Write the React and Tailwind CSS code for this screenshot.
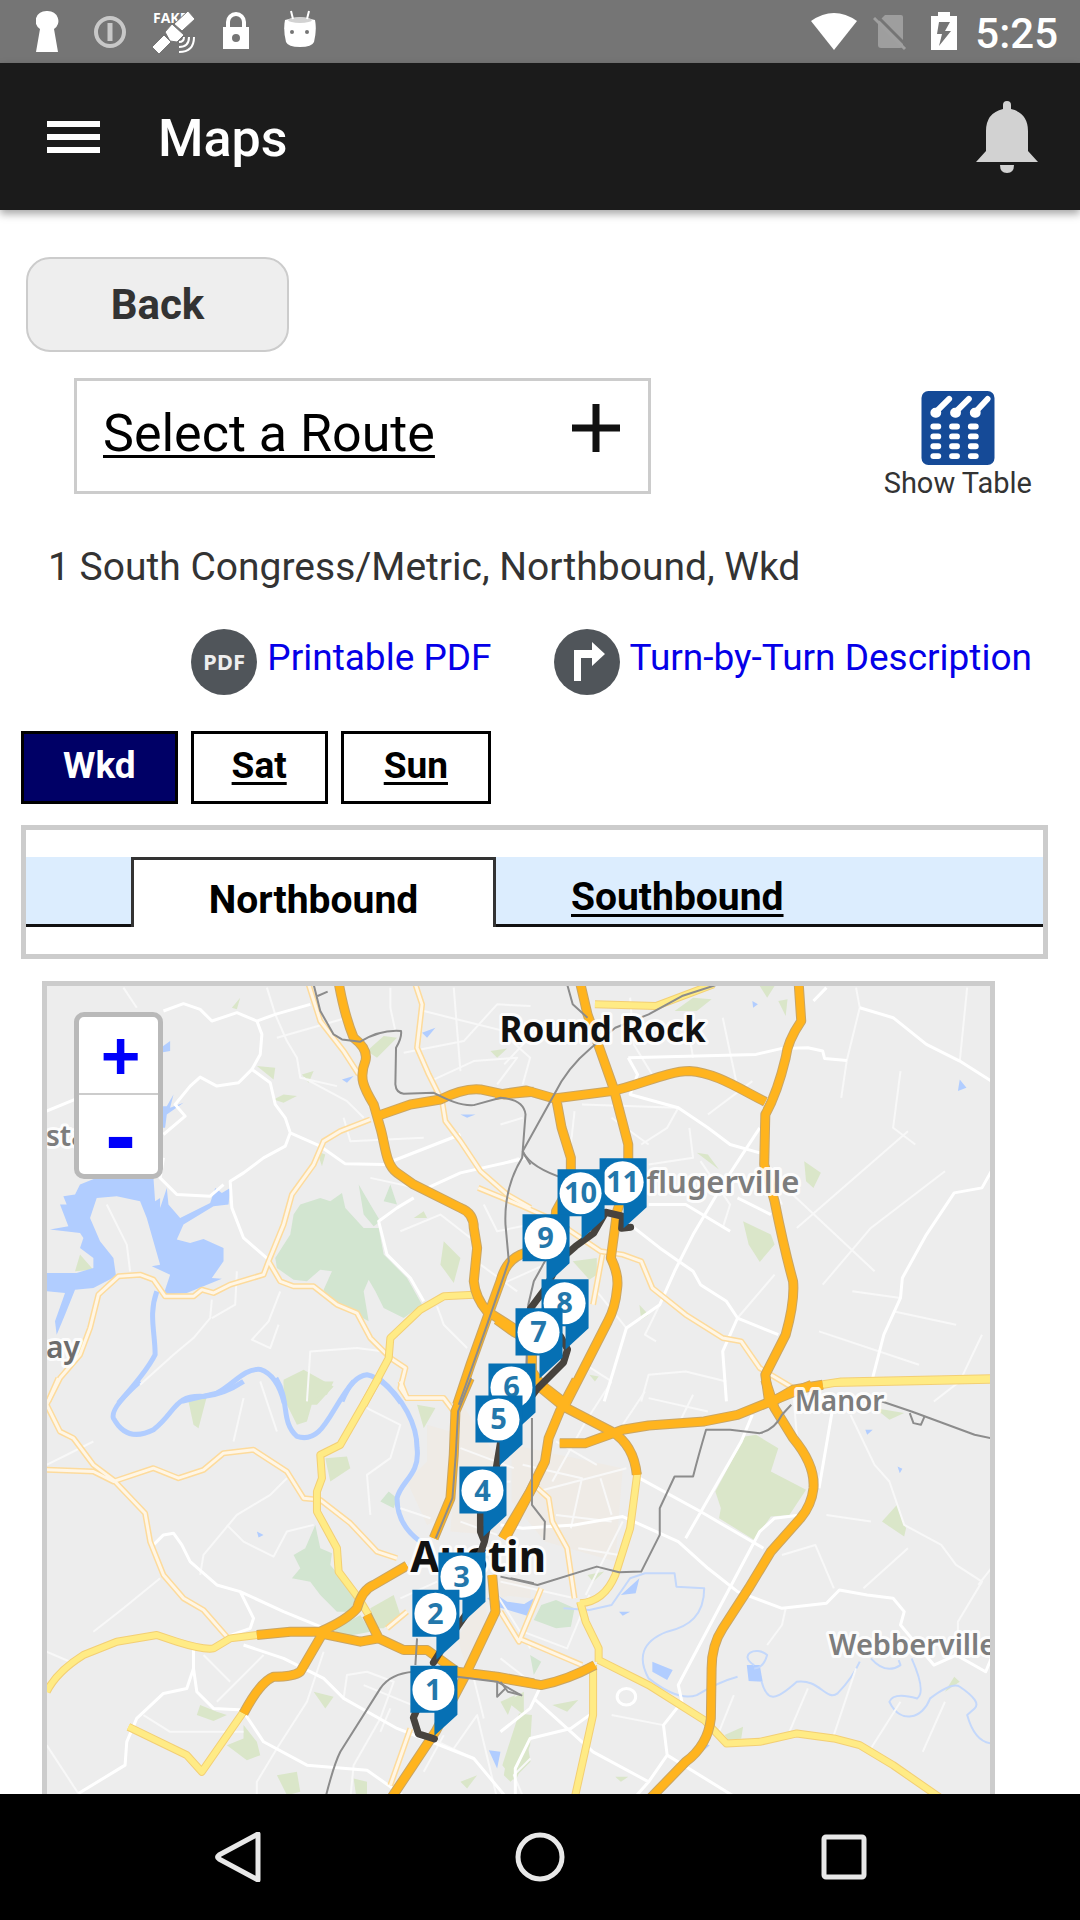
import React from "react";

const TILES = [
  {
    transform: "translate(30 970) scale(0.33333)",
    park: "M810 700 L870 680 L900 690 L935 665 L945 710 L1000 770 L1045 770 L1060 850 L1130 920 L1175 1000 L1120 1040 L1060 1010 L1035 960 L1015 925 L1000 960 L1015 1050 L960 1020 L930 1010 L905 1000 L880 955 L905 900 L870 895 L830 930 L790 925 L740 890 L735 860 L780 790 L790 730 Z M985 640 L1000 730 L1030 765 L1050 750 L1020 700 Z M1080 640 L1100 700 L1060 690 Z",
    grass: "M680 285 L735 290 L730 325 Z M1010 240 L1060 195 L1100 200 L1040 260 Z M820 1195 L910 1245 L860 1300 L760 1300 L760 1225 Z M605 110 L630 80 L620 115 Z M135 900 L150 850 L190 895 Z M860 540 L885 550 L875 585 Z M730 385 L760 370 L800 375 L760 395 Z M815 310 L850 300 L835 335 Z M1380 240 L1430 232 L1400 260 Z M1240 810 L1290 860 L1270 935 L1230 880 Z M1150 740 L1180 720 L1190 740 Z",
    urban: "",
    water: "M385 405 L410 405 L430 370 L420 410 L460 395 L410 430 L405 470 L385 470 Z M385 235 L420 210 L420 240 L390 245 Z M200 620 L370 620 L375 690 L390 680 L390 710 L410 650 L415 700 L450 740 L540 695 L555 650 L575 665 L600 650 L595 700 L550 705 L460 760 L440 805 L480 815 L520 803 L580 830 L580 870 L545 920 L575 922 L520 945 L470 965 L400 970 L420 910 L365 885 L390 880 L350 740 L330 690 L260 675 L200 680 L180 740 L210 810 L250 860 L258 915 L190 950 L135 955 L105 1030 L80 1090 L75 1050 L105 965 L50 960 L50 905 L140 905 L190 890 L190 860 L150 830 L160 800 L150 785 L60 775 L115 765 L90 700 L110 700 L100 675 L135 670 L150 640 Z M1175 185 L1215 170 L1190 200 Z M935 325 L970 315 L950 335 Z M1290 430 L1335 430 L1310 440 Z",
    river: "M380 960 C355 1030 375 1080 375 1150 Q350 1200 265 1295 M455 1290 L560 1265 C610 1240 640 1190 690 1194 Q740 1210 762 1295 M935 1290 Q965 1215 1010 1210 Q1060 1220 1112 1295",
    creek: "",
    minor: "M50 420 L135 385 M400 120 L460 98 L510 115 L545 150 L620 125 L680 150 L735 130 L840 100 M680 150 L695 190 L690 250 L665 295 L625 335 L560 345 L510 318 L480 345 L435 400 L465 435 L400 490 M665 295 L720 335 L735 400 L765 440 L780 485 L870 525 L945 578 L1060 580 L1290 490 M780 485 L765 525 L700 560 L640 605 L600 630 L605 710 L640 800 L715 865 M400 560 L390 620 L440 670 L540 675 L580 640 M1180 655 L1290 605 L1490 560 M1150 680 L1100 710 L1045 750 L1070 850 L1140 920 L1180 990",
    lane: "M1080 50 L1080 110 L1095 180 M710 50 L735 130 L770 210 L800 260 L810 320 L920 345 M820 320 L950 390 L1000 440 M1120 245 L1300 210 L1400 100 L1500 105 M1220 1005 L1240 1060 L1310 1130 M750 960 L715 1050 L665 1105 L720 1130 L745 1060 M545 985 L540 1040 L490 1100 L430 1150 L330 1240 M830 1290 L840 1140 L980 1130 L1060 1140 M620 900 L615 1000 L545 1040 M230 700 L290 820 L300 900 M1200 330 L1330 270 L1460 260 L1400 340 M740 200 L950 140 M940 440 L960 510 L1180 500 M1020 620 L1180 655 M1110 780 L1230 730 L1320 800 M1360 700 L1400 780 L1500 760 M1350 880 L1460 960 M1270 50 L1290 300 M1180 120 L1500 200 M280 50 L320 110",
    pale: "M835 40 L870 150 L940 240 L985 310 M1155 40 L1175 100 L1160 230 L1195 310 L1235 390 L1245 450 L1290 510 L1350 600 L1430 670 L1500 710 M1020 445 L930 480 L880 510 L850 580 L785 670 L760 760 L715 870 L700 910 L600 940 L550 965 L515 955 L490 975 L405 975 L370 925 L330 910 L265 915 L205 970 L180 1070 L150 1150 L90 1220 L55 1290 M715 870 L750 930 L790 945 L850 945 L920 1000 L980 1025 L1020 1100 L1080 1160 L1125 1190 L1110 1250 L1130 1280 L1240 1280",
    yellow: "M1330 970 L1240 975 L1170 1015 L1080 1100 L1075 1160 L1000 1300",
    orange: "M925 35 C935 90 945 140 970 200 Q1015 235 1005 270 C985 320 1000 350 1030 400 L1050 470 C1065 520 1065 580 1100 605 L1150 640 L1290 710 Q1330 725 1330 770 L1340 830 L1330 930 Q1335 980 1370 1020 L1465 1080 M1040 435 L1140 400 L1230 385 Q1300 350 1350 355 L1420 370 L1510 362 M1520 830 L1470 850 Q1425 870 1410 930 L1370 1040 L1320 1180 L1280 1300",
    rail: "M850 40 L870 120 L910 190 L935 205 L990 212 Q1050 175 1112 180 Q1115 200 1097 230 L1095 340 Q1097 365 1120 368 L1210 365 C1250 385 1290 405 1330 402 L1410 380 Q1480 385 1485 430 L1475 560 Q1420 650 1425 760 L1435 870 L1370 1060 L1285 1300 M862 75 L892 62 M1475 540 L1500 580",
  },
  {
    transform: "translate(500 970) scale(0.37 0.33333)",
    park: "",
    grass: "M820 570 L865 605 L845 650 L825 630 Z M655 750 L730 790 L740 820 L700 872 L670 820 Z M195 870 L260 860 L260 910 L240 925 Z M530 545 L560 550 L590 595 Z M470 120 L520 80 L570 85 L530 120 Z M700 45 L740 45 L720 80 Z M750 90 L775 85 L770 135 Z M240 1210 L265 1215 L255 1230 Z M375 1000 L400 1030 L380 1045 Z",
    urban: "",
    water: "M1240 325 L1258 350 L1235 360 Z M680 90 L695 100 L682 110 Z",
    river: "",
    creek: "",
    minor: "M345 260 L690 250 L760 232 L830 230 L870 240 L875 262 L935 268 M345 260 L370 310 L350 370 L480 410 L560 470 L620 520 L700 545 M700 470 L600 640 L520 790 L470 900 L430 1000 L340 1070 L310 1180 L280 1290 M350 760 L430 830 L520 900 L540 940 L610 990 L640 1040 L750 1090 M640 1040 L600 1140 L610 1290 M1325 600 L1300 650 L1225 665 L1150 790 L1085 920 L1080 980 L1035 1090 L1000 1240 M640 680 L730 730 M400 700 L500 700 L620 780 M845 90 L880 50 M970 110 L1060 140 L1150 220 L1240 270 L1325 330",
    lane: "M935 268 L970 110 L960 50 M935 268 L920 380 M1240 270 L1260 50 M200 420 L190 520 M220 400 L480 410 L450 470 L380 520 M400 580 L520 560 L510 470 M540 570 L620 700 L600 770 M760 640 L1010 900 M800 770 L1100 480 M870 940 L1000 770 L1200 600 M860 1080 L1130 1180 M1060 1020 L1230 1060 M1300 1090 L1240 1230 L1170 1290 M740 910 L640 1040 M1080 300 L1060 470 L1120 520 M350 80 L360 220 L420 330 M500 130 L520 260 M600 140 L640 350 M560 430 L680 330 M0 180 L80 260 L60 340 M10 280 L120 150 M0 460 L60 440 M0 940 L120 880 M260 960 L340 1070 M430 1000 L390 1090 L420 1110 M380 1290 L400 1210 L500 1200 L610 1230 M230 1180 L300 1230 M400 520 L300 440 M720 600 L760 700 M0 580 L50 560 M950 960 L1080 980",
    pale: "M-60 650 L60 705 L150 750 L270 840 L330 850 L380 870 L410 950 L500 1030 L600 1100 L650 1110 L700 1190 L790 1250 M275 850 L250 1000",
    yellow: "M255 100 L420 105 L575 40 M830 1245 L920 1230 L1330 1220",
    orange: "M215 35 L235 130 L270 240 L305 350 L345 520 L345 620 L315 720 L298 860 Q320 910 315 950 Q310 1010 290 1050 L175 1300 M-15 372 L70 358 L145 382 L300 360 C370 345 450 300 510 300 C580 305 640 350 715 392 M150 380 L165 470 L190 560 L190 640 L150 720 L145 790 M805 35 L812 150 Q775 210 770 260 C755 330 740 380 715 430 L712 580 L740 690 C760 800 775 870 790 930 Q795 990 770 1090 L715 1210 L725 1290 M-10 1045 L36 1082 L85 1110 L85 1200 L110 1240 L180 1300 M720 1300 L790 1255 L870 1240",
    rail: "M180 40 L195 100 L235 140 M610 32 L490 75 L400 130 L310 170 L245 230 Q180 290 145 370 L60 540 M60 540 Q80 590 180 625 M185 765 L120 870 L90 930 L75 1000 L70 1180",
  },
  {
    transform: "translate(30 1380) scale(0.33333)",
    park: "M785 590 L810 560 L790 520 L825 500 L855 430 L870 500 L905 515 L900 550 L925 580 L975 650 L960 690 L920 690 L870 640 L840 600 Z M910 745 L990 700 L1020 750 L940 765 Z M1050 360 L1075 330 L1100 350 L1090 380 Z",
    grass: "M475 60 L530 45 L505 140 L490 130 Z M760 0 L910 0 L890 40 L850 50 L830 120 L800 130 L770 70 Z M885 230 L950 225 L960 260 L900 300 Z M850 930 L910 945 L885 980 Z M510 970 L560 990 L590 1000 L550 1018 L500 1000 Z M640 1030 L680 1080 L690 1120 L650 1135 L590 1090 L640 1070 Z M740 1180 L800 1170 L810 1230 L770 1240 Z M970 1190 L1010 1200 L1010 1260 L980 1260 Z M1420 1180 L1430 1120 L1490 1080 L1500 1140 L1440 1200 Z M1020 680 L1090 640 L1110 700 L1060 740 L1030 740 Z M1160 70 L1215 80 L1180 140 Z M1290 1200 L1340 1180 L1310 1220 Z M1430 960 L1480 930 L1480 1000 Z",
    urban: "M1190 130 L1260 150 L1250 400 L1190 430 L1130 300 L1190 240 Z M1290 60 L1400 230 L1390 460 L1260 450 Z M1280 770 L1360 640 L1370 700 L1310 860 Z M1400 590 L1500 610 L1500 650 L1410 640 Z",
    water: "M1370 650 L1400 640 L1430 660 L1500 670 L1500 705 L1400 675 Z M1375 1105 L1410 1110 L1400 1160 Z M680 450 L700 460 L685 468 Z",
    river: "M330 0 Q240 80 250 110 Q290 185 370 145 C440 90 430 40 520 45 Q580 40 640 0 M737 -10 C780 60 750 120 800 165 C880 190 900 80 970 0 M1045 -10 C1120 50 1160 130 1160 200 C1170 280 1110 300 1100 350 Q1100 430 1170 480",
    creek: "",
    minor: "M370 490 L400 460 L430 455 L455 490 L480 540 L560 610 L630 630 L760 690 L870 735 M630 630 L670 710 L660 740 L590 765 M490 860 L470 920 L400 935 L320 1010 L290 1080 L285 1150 L145 1235 M490 800 L490 860 L500 930 L550 980 L640 985 M640 790 L760 830 L880 890 L940 950 L1100 1040 L1330 1130 L1430 1250 M640 990 L700 1080 L830 1150 L1010 1165 L1130 1250",
    lane: "M145 1235 L50 1090 M880 810 L830 960 L740 1100 L680 1200 L680 1250 M390 590 L280 680 L190 750 M510 580 L520 520 L620 400 L720 340 L770 290 M50 250 L190 180 M590 430 L640 480 L730 525 L770 450 L850 430 M1010 80 L1110 130 L1080 230 L1010 280 L1020 400 M940 950 L950 880 L1010 870 L1090 900 L1050 1010 L970 1150 L960 1250 M1400 1250 L1340 1000 L1270 1100 M1500 1130 L1450 1180 L1480 1250 M340 1000 L420 1050 L640 1050 M520 820 L600 900 M700 820 L560 960 M1000 910 L1170 980 M1050 1050 L1080 980 M1200 1070 L1330 1130 M1410 830 L1500 900 M1330 890 L1360 1010 M1180 1170 L1240 1060 M50 810 L120 840 M640 50 L610 180 M690 0 L740 150 M1110 380 L1200 410 M1290 420 L1400 460 M1290 200 L1450 260 M1300 310 L1440 300 M1220 600 L1110 650 M1400 640 L1500 800",
    pale: "M85 -10 L50 70 L90 150 L130 170 L190 250 L250 295 L345 395 L360 480 L400 580 L460 650 L520 685 L590 765 M50 265 L190 270 L250 300 L370 260 L445 290 L520 265 L580 215 L670 205 L770 270 L820 350 L870 355 L960 425 L1040 510 L1100 530 M1110 0 L1130 50 L1240 50 L1270 90 M1140 1040 L1080 1210 M1130 690 L1070 740",
    yellow: "M1045 -10 L930 190 L870 220 L875 290 L860 330 L860 390 L920 500 L925 570 L985 650 L1015 700 M50 930 Q80 870 160 820 L260 780 L380 760 L440 780 Q520 805 550 800 L600 770 L680 760 M295 1035 L470 1120 L515 1170 L640 990",
    orange: "M680 760 L780 750 L870 750 Q950 715 980 680 Q995 625 1030 610 L1130 552 M880 750 L810 870 Q790 885 730 885 Q690 900 640 995 M870 755 L990 780 L1045 770 L1120 805 L1190 805 L1280 870 L1400 885 L1510 905 M1010 700 L1045 770 M1318 -10 L1275 90 L1270 220 L1260 350 L1210 470 M1515 300 L1425 470 M1385 580 L1395 690 L1300 890 L1215 1050 L1075 1260",
    rail: "M1322 -10 L1283 90 L1276 220 L1266 350 L1216 470 M1160 770 L1155 850 M1150 870 Q1080 875 1050 920 L930 1110 Q910 1150 885 1250 M1280 885 L1400 900 L1475 942 M1400 900 L1400 945 L1425 920 M1440 590 L1510 605",
  },
  {
    transform: "translate(500 1380) scale(0.37 0.33333)",
    park: "M110 670 L150 655 L200 680 L190 735 L150 740 L90 715 Z M80 820 L110 840 L90 880 Z",
    grass: "M660 165 L690 160 L750 200 L730 270 L825 325 L780 400 L730 405 L685 475 L590 410 L595 380 L580 330 Z M1030 420 L1070 370 L1095 440 L1090 465 Z M605 1060 L655 1035 L650 1070 L615 1075 Z M50 995 L85 1000 L80 1090 L40 1200 L5 1150 Z M1200 930 L1225 885 L1240 900 Z M1010 80 L1090 95 L1050 115 Z M0 960 L40 940 L20 1000 Z M140 970 L210 955 L180 990 Z M310 1185 L345 1185 L325 1200 Z M235 580 L280 570 L250 600 Z",
    urban: "M30 190 L330 260 L310 540 L120 480 L30 360 Z M0 580 L90 620 L0 650 Z",
    water: "M410 840 L465 865 L450 895 L410 870 Z M665 850 L700 850 L708 900 L670 898 Z M325 640 L375 590 L365 635 Z M5 660 L60 670 L90 650 L80 700 L40 685 Z M985 145 L1005 145 L990 160 Z M1072 255 L1085 262 L1078 275 Z M550 1085 L565 1090 L550 1105 Z M320 690 L350 690 L330 702 Z",
    river: "",
    creek: "M170 680 L240 685 L300 670 L350 590 L390 575 L470 575 L475 615 L550 620 C550 700 510 735 450 750 C380 780 370 830 400 890 Q480 960 530 940 Q590 900 640 885 M685 850 C640 820 690 790 720 820 Q710 860 685 860 M705 900 C720 960 740 960 800 900 C860 890 880 960 910 935 Q950 890 970 840 M1000 830 Q1040 880 1080 850 L1075 835 M1110 830 Q1150 930 1125 950 Q1060 930 1050 960 C1080 1030 1140 1010 1160 950 Q1220 900 1240 915 Q1300 960 1280 980 L1260 1000 Q1280 1080 1325 1085",
    minor: "M860 320 L900 60 M680 100 L650 180 L500 470 M375 290 L540 390 L710 500 M0 430 L60 440 L200 430 L330 405 L480 480 L560 560 L640 630 L760 680 L880 665 L915 625 L990 640 L1060 650 L1090 690 L1080 730 L1170 850 L1230 820 L1310 870 L1325 830 M810 400 L740 410 L700 450 L480 910 L490 960 L440 1030 L450 1120 L400 1200 L360 1250 M450 1120 L640 1250 M90 950 L250 1110 L400 1200 M110 910 L80 980 L0 1050 M240 1000 L190 1040 L80 1070 L40 1160 L40 1250 M315 945 A25 25 0 1 1 340 970 A25 25 0 0 1 315 945",
    lane: "M790 30 L800 160 M945 100 L1010 250 L1050 300 L1090 430 L1190 490 L1230 550 L1300 600 L1235 720 L1235 760 M770 680 L760 730 L720 790 M300 0 L230 120 L140 300 M390 30 L330 130 M400 50 L560 90 M100 330 L340 260 M150 400 L300 420 M60 250 L220 290 L190 440 M270 290 L300 400 M330 420 L230 640 M150 180 L260 250 M210 500 L320 520 M0 600 L200 650 M60 750 L180 800 L240 640 M480 130 L520 40 M760 520 L850 490 L900 620 M900 1060 L960 860 M1000 1100 L1080 960 M1140 1110 L1200 960 M830 920 L780 1050 M630 940 L590 1050 M1100 500 L980 620 M1290 610 L1325 560 M260 120 L300 170 M440 1030 L300 1000 M880 400 L1000 420",
    pale: "M90 310 L130 350 L140 420 L180 500 L200 650 M0 690 L50 780 L110 620 M50 770 L220 850",
    yellow: "M370 270 L350 440 L310 580 Q280 660 215 665 M215 660 L230 720 L265 800 L265 840 M250 850 L250 1000 L200 1250 M265 835 L400 910 L550 1015 L610 1085 L700 1080 L800 1055 L900 1070 L970 1090 L1060 1150 L1190 1250 M820 20 L900 5 L1330 -5",
    orange: "M205 -5 L160 90 L130 170 L120 240 L80 330 L5 470 M110 20 L170 75 L300 150 Q360 190 368 280 M160 185 L230 185 L330 145 L400 132 L550 120 L640 100 L730 60 L840 10 M715 -5 L740 80 L790 170 Q850 250 845 320 Q840 370 810 410 L730 510 L670 620 L600 740 Q570 790 570 860 L568 1010 Q560 1090 500 1140 L395 1260 M-20 885 L110 910 Q180 895 255 850",
    rail: "M85 110 L85 370 L120 420 L118 475 M0 585 L100 610 L260 555 L320 572 L380 570 L430 460 L430 380 L470 285 L520 285 Q535 220 555 145 L620 145 L700 155 Q740 145 760 100 L785 70 M1030 60 L1110 90 L1280 160 L1325 170 M1105 95 L1115 125 L1135 130 L1145 105 M0 900 L20 930 L55 940",
  },
];

const FILLS = [
  ["urban", "fill-[#efebe6]"],
  ["park", "fill-[#d2e5d0]"],
  ["grass", "fill-[#dae6c9]"],
  ["water", "fill-[#b1cdff]"],
];

const STROKES = [
  ["river", "stroke-[#b1cdff]", 5],
  ["creek", "stroke-[#c4d8fb]", 2],
  ["lane", "stroke-[#f8f8f8]", 2],
  ["minor", "stroke-white", 3],
  ["pale", "stroke-[#fddb9c]", 6],
  ["pale", "stroke-[#fff6e6]", 3],
  ["yellow", "stroke-[#f3cf74]", 8],
  ["yellow", "stroke-[#ffeb85]", 6],
  ["orange", "stroke-[#c9a564]", 10],
  ["orange", "stroke-[#ffb41e]", 8],
  ["rail", "stroke-[#8c8c8c]", 2],
];

const STOPS = [
  [11, 599, 1157],
  [10, 557, 1168],
  [9, 522, 1213],
  [8, 541, 1278],
  [7, 515, 1307],
  [6, 488, 1362],
  [5, 475, 1394],
  [4, 459, 1465],
  [3, 438, 1551],
  [2, 412, 1588],
  [1, 410, 1664],
];

const LABELS = [
  ["Round Rock", 499, 1041, "text-[35px] font-bold fill-[#111]"],
  ["Austin", 410, 1570, "text-[42px] font-bold fill-[#111]"],
  ["Pflugerville", 627, 1192, "text-[31px] font-semibold fill-[#7d7d7d]"],
  ["Manor", 794, 1410, "text-[28px] font-semibold fill-[#7d7d7d]"],
  ["Webberville", 828, 1653, "text-[29px] font-semibold fill-[#7d7d7d]"],
  ["sta", 46, 1145, "text-[28px] font-semibold fill-[#7d7d7d]"],
  ["ay", 46, 1357, "text-[30px] font-semibold fill-[#6d6d6d]"],
];

function RouteMap() {
  return (
    <svg
      viewBox="47 985 942 809"
      preserveAspectRatio="xMidYMin slice"
      className="block h-full w-full bg-[#ededed]"
      role="img"
      aria-label="Route map of Austin"
    >
      {FILLS.map(([key, cls]) =>
        TILES.map((t) => <path key={key + t.transform} transform={t.transform} d={t[key]} className={cls} />)
      )}
      {STROKES.map(([key, cls, width]) =>
        TILES.map((t) => (
          <path
            key={key + width + t.transform}
            transform={t.transform}
            d={t[key]}
            fill="none"
            className={cls}
            strokeWidth={width}
            strokeLinejoin="round"
            vectorEffect="non-scaling-stroke"
          />
        ))
      )}
      {LABELS.map(([text, x, y, cls]) => (
        <text
          key={text}
          x={x}
          y={y}
          className={`${cls} font-['Noto_Sans','Open_Sans',sans-serif]`}
          stroke="#fff"
          strokeOpacity="0.9"
          strokeWidth="6"
          strokeLinejoin="round"
          paintOrder="stroke"
        >
          {text}
        </text>
      ))}
      <path
        d="M434 1737 L418 1732 L413 1716 L420 1700 M433 1661 L443 1645 L466 1612 L470 1580 L484 1540 L480 1530 L480 1505 M484 1540 L492 1500 L496 1465 L501 1435 L537 1387 L563 1361 L567 1348 L560 1335 M530 1307 L545 1287 L560 1258 L575 1245 L593 1232 L605 1211 L622 1215 L621 1227 L630 1226"
        fill="none"
        stroke="#47433e"
        strokeWidth="7"
        strokeLinejoin="round"
        strokeLinecap="round"
      />
      {STOPS.map(([n, x, y]) => (
        <g key={n} transform={`translate(${x} ${y})`}>
          <path d="M0 0 H47 V49 L24 70 V47 H0 Z" fill="#0670b4" />
          <circle cx="23" cy="24" r="21" fill="#fff" />
          <text
            x="23"
            y="34"
            textAnchor="middle"
            className="fill-[#2377ab] font-['Noto_Sans','Open_Sans',sans-serif] text-[29px] font-bold"
          >
            {n}
          </text>
        </g>
      ))}
    </svg>
  );
}

function StatusBar() {
  return (
    <div className="flex h-[63px] shrink-0 items-center justify-between bg-[#757575] pl-9 pr-[22px] text-white">
      <div className="flex items-center">
        <svg className="h-[63px] w-6" viewBox="0 0 24 63" fill="currentColor">
          <path d="M11 11 A11 10 0 0 1 18 29 L22 52 H0 L4 29 A11 10 0 0 1 11 11" />
        </svg>
        <svg className="ml-[34px] h-[63px] w-8" viewBox="0 0 32 63" fill="none" stroke="#c8c8c8">
          <circle cx="16" cy="32" r="14" strokeWidth="4" />
          <path d="M16 23 V41" strokeWidth="5" />
        </svg>
        <svg className="ml-[26px] h-[63px] w-11" viewBox="0 0 44 63" fill="currentColor">
          <text x="1" y="23" className="font-['Open_Sans',sans-serif] text-[14px] font-bold">
            FAKE
          </text>
          <path d="M22 24 L36 11 L43 19 L30 31 Z M13 32 L20 24 L32 35 L25 42 L18 41 Z M0 47 L12 35 L19 42 L7 54 Z" stroke="#757575" strokeWidth="1" />
          <path d="M27 42 Q32 42 32 37 M27 47 Q37 47 37 37 M27 52 Q42 52 42 37" fill="none" stroke="currentColor" strokeWidth="2" />
        </svg>
        <svg className="ml-[27px] h-[63px] w-[26px]" viewBox="0 0 26 63" fill="currentColor">
          <path d="M5 28 V22 A8 8 0 0 1 21 22 V28" fill="none" stroke="currentColor" strokeWidth="4" />
          <path fillRule="evenodd" d="M0 27 H26 V49 H0 Z M13 34 A4 4 0 1 0 13 42 A4 4 0 1 0 13 34" />
        </svg>
        <svg className="ml-[35px] h-[63px] w-[32px]" viewBox="0 0 32 63" fill="currentColor">
          <path d="M1 20 Q16 15 31 20 Q33 30 30 42 Q28 47 16 47 Q4 47 2 42 Q-1 30 1 20" />
          <ellipse cx="16" cy="20" rx="12" ry="3" fill="#d2d2d2" />
          <path d="M7 11 L9 19 M25 11 L23 19" stroke="currentColor" strokeWidth="2" />
          <circle cx="8" cy="32" r="2" fill="#757575" />
          <circle cx="23" cy="32" r="2" fill="#757575" />
        </svg>
      </div>
      <div className="flex items-center">
        <svg className="h-[63px] w-[46px]" viewBox="0 0 46 63" fill="currentColor">
          <path d="M0 21 Q23 5 46 21 L23 50 Z" />
        </svg>
        <svg className="ml-[16px] h-[63px] w-[35px]" viewBox="0 0 35 63">
          <path d="M12 15 H28 Q30 15 30 17 V45 Q30 48 27 48 H8 Q5 48 5 45 V22 Z" fill="#9e9e9e" />
          <path d="M3 15 L35 47" stroke="#757575" strokeWidth="3" />
          <path d="M1 18 L32 49" stroke="#a0a0a0" strokeWidth="3" />
        </svg>
        <svg className="ml-[23px] h-[63px] w-[26px]" viewBox="0 0 26 63" fill="currentColor">
          <path fillRule="evenodd" d="M0 16 H7 V12 H19 V16 H26 V50 H0 Z M8 22 L6 34 H11 L8 46 L20 31 H14 L19 22 Z" />
        </svg>
        <span className="ml-[18px] pt-1 text-[42px] font-medium leading-[59px]">5:25</span>
      </div>
    </div>
  );
}

function AppBar() {
  return (
    <header className="z-10 flex h-[147px] shrink-0 items-center bg-[#1b1b1b] pl-[46px] pr-[42px] text-white shadow-[0_4px_8px_rgba(0,0,0,0.35)]">
      <button aria-label="Open menu">
        <svg className="h-[34px] w-[54px]" viewBox="0 0 54 34" stroke="currentColor" strokeWidth="6">
          <path d="M1 4 H54 M1 17 H54 M1 30 H54" />
        </svg>
      </button>
      <h1 className="ml-[58px] pt-1 text-[52px] font-medium leading-[60px]">Maps</h1>
      <button aria-label="Notifications" className="ml-auto">
        <svg className="h-[72px] w-[62px]" viewBox="0 0 62 72" fill="#d2d2d2">
          <path d="M27 8 V4 Q27 0 31 0 Q35 0 35 4 V8 Q52 12 52 30 V50 L62 61 H0 L10 50 V30 Q10 12 27 8 Z" />
          <path d="M24 64 H38 Q38 72 31 72 Q24 72 24 64" />
        </svg>
      </button>
    </header>
  );
}

function NavBar() {
  return (
    <nav className="z-10 flex h-[126px] shrink-0 items-center justify-around bg-black px-[84px] text-[#e8e8e8]">
      {[
        ["Back", <path key="p" d="M47 2 V48 L8 27 Q5 25 8 23 Z" />],
        ["Home", <circle key="p" cx="25" cy="25" r="22" />],
        ["Recent apps", <rect key="p" x="5" y="5" width="40" height="40" rx="2" />],
      ].map(([label, shape]) => (
        <button key={label} aria-label={label}>
          <svg className="h-[50px] w-[50px]" viewBox="0 0 50 50" fill="none" stroke="currentColor" strokeWidth="5" strokeLinejoin="round">
            {shape}
          </svg>
        </button>
      ))}
    </nav>
  );
}

export default function App() {
  return (
    <div className="flex h-screen flex-col overflow-hidden bg-white font-[Roboto,sans-serif] text-[#333]">
      <StatusBar />
      <AppBar />
      <main className="flex min-h-0 flex-1 flex-col overflow-hidden">
        <button className="ml-[26px] mt-[47px] h-[95px] w-[263px] shrink-0 self-start rounded-[24px] border-2 border-[#ccc] bg-[#eee] text-[42px] font-bold leading-[60px]">
          Back
        </button>

        <div className="mt-[26px] flex shrink-0 items-start justify-between pl-[74px] pr-[48px]">
          <button className="flex h-[116px] w-[577px] items-center justify-between border-[3px] border-[#ccc] bg-white pb-1 pl-[26px] pr-7 text-[52px] leading-[60px] text-black">
            <span className="underline decoration-[3px] underline-offset-[4px]">Select a Route</span>
            <svg className="mb-3 h-12 w-12" viewBox="0 0 48 48" stroke="#111" strokeWidth="7">
              <path d="M24 0 V48 M0 24 H48" />
            </svg>
          </button>
          <button className="mt-[13px] flex flex-col items-center text-[29px] leading-9">
            <svg className="h-[74px] w-[74px]" viewBox="0 0 74 75">
              <rect width="74" height="75" rx="7" fill="#154a97" />
              <g stroke="#fff" strokeLinecap="round">
                <path d="M14 22 L28 8 M34 22 L48 8 M54 22 L67 8" strokeWidth="6" />
                <path d="M14 22 H15 M34 22 H35 M54 22 H55" strokeWidth="10" />
                <path d="M12 36 H17 M12 46 H17 M12 56 H17 M12 66 H17 M31 36 H36 M31 46 H36 M31 56 H36 M31 66 H36 M50 36 H55 M50 46 H55 M50 56 H55 M50 66 H55" strokeWidth="6" />
              </g>
            </svg>
            Show Table
          </button>
        </div>

        <h2 className="mt-[36px] shrink-0 pl-12 text-[39px] leading-[60px]">1 South Congress/Metric, Northbound, Wkd</h2>

        <div className="mt-8 flex shrink-0 items-center justify-end gap-[62px] pr-12 text-[37px] leading-[56px] text-[#0500e8]">
          <a href="#pdf" className="flex items-center gap-[10px]">
            <svg className="h-[66px] w-[66px]" viewBox="0 0 66 66">
              <circle cx="33" cy="33" r="33" fill="#50555a" />
              <text x="33" y="41" textAnchor="middle" className="fill-[#eee] font-['Open_Sans',sans-serif] text-[22px] font-bold">
                PDF
              </text>
            </svg>
            <span className="mb-2">Printable PDF</span>
          </a>
          <a href="#directions" className="flex items-center gap-[10px]">
            <svg className="h-[66px] w-[66px]" viewBox="0 0 66 66">
              <circle cx="33" cy="33" r="33" fill="#50555a" />
              <path d="M20 52 V21 H38 V13 L51 25 L38 37 V29 H27 V52 Z" fill="#fff" />
            </svg>
            <span className="mb-2">Turn-by-Turn Description</span>
          </a>
        </div>

        <div className="mt-9 flex shrink-0 gap-[13px] pl-[21px] text-[37px] font-bold leading-[60px] text-black">
          <button className="h-[73px] border-[3px] border-black bg-[#000066] px-[39px] pb-1 text-white">Wkd</button>
          <button className="h-[73px] border-[3px] border-black px-[38px] pb-1 underline decoration-[3px] underline-offset-[4px]">Sat</button>
          <button className="h-[73px] border-[3px] border-black px-10 pb-1 underline decoration-[3px] underline-offset-[4px]">Sun</button>
        </div>

        <div className="ml-[21px] mr-8 mt-[21px] shrink-0 border-[5px] border-[#ccc] pb-[27px] pt-[27px]">
          <div className="flex h-[70px] bg-[#dcedfe] text-[39px] font-bold text-black">
            <div className="w-[105px] border-b-[3px] border-[#111]" />
            <button className="w-[365px] border-[3px] border-b-0 border-[#333] bg-white pt-3 leading-[50px]">Northbound</button>
            <button className="flex-1 border-b-[3px] border-[#111] pl-[75px] pt-3 text-left leading-[50px] underline decoration-[3px] underline-offset-[4px]">
              Southbound
            </button>
          </div>
        </div>

        <div className="relative ml-[42px] mr-[85px] mt-[22px] min-h-0 flex-1 border-[5px] border-b-0 border-[#ccc]">
          <RouteMap />
          <div className="absolute left-[27px] top-[26px] flex w-[89px] flex-col overflow-hidden rounded-[10px] border-[5px] border-[#b9b9b9] bg-white font-['Liberation_Sans',sans-serif] font-bold text-[#0000fa]">
            <button aria-label="Zoom in" className="h-[78px] border-b-2 border-[#ccc] pl-1 text-[68px] leading-[74px]">+</button>
            <button aria-label="Zoom out" className="h-[79px] pl-1 text-[92px] leading-[72px]">-</button>
          </div>
        </div>
      </main>
      <NavBar />
    </div>
  );
}
